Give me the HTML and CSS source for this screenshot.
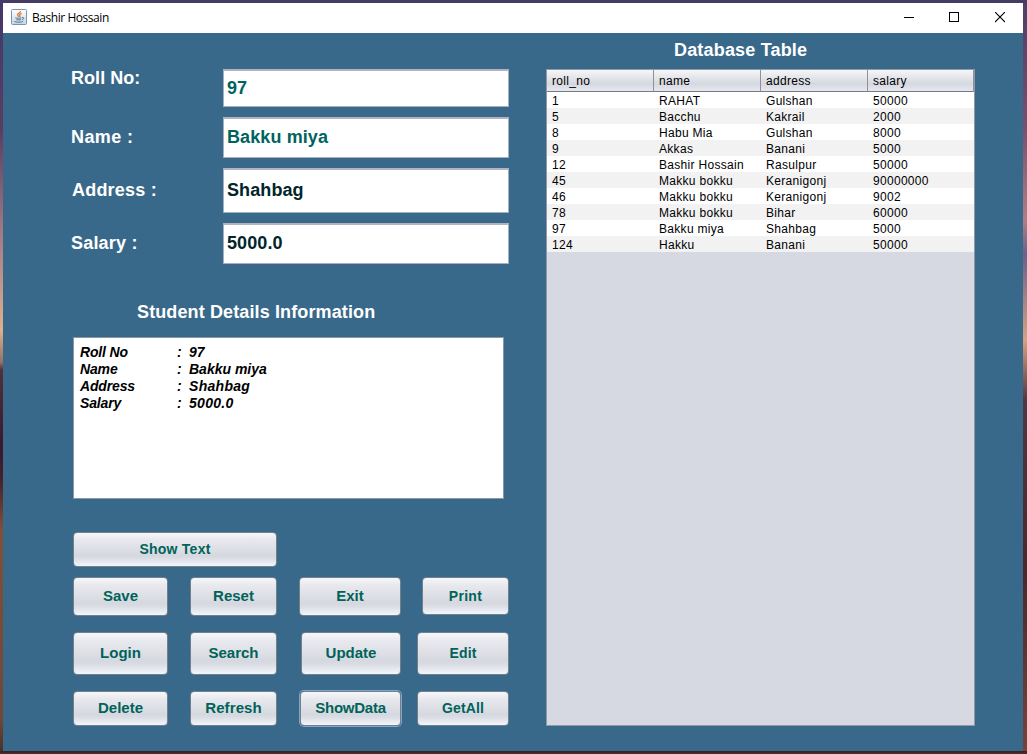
FILE: index.html
```html
<!DOCTYPE html>
<html lang="en">
<head>
<meta charset="utf-8">
<title>Bashir Hossain</title>
<link rel="stylesheet" href="styles.css">
</head>
<body>
<div class="window">
  <header class="titlebar">
    <svg class="app-icon" width="16" height="16" viewBox="0 0 16 16" fill="none">
      <rect x=".5" y=".5" width="15" height="15" rx="1" fill="url(#g)" stroke="#7896b1"/>
      <defs><linearGradient id="g" x2="0" y2="1"><stop stop-color="#fff"/><stop offset="1" stop-color="#c3d5e3"/></linearGradient></defs>
      <path d="M9.3 2C10 4 5.5 4.5 6.7 6.2L7.8 8M10.7 4.3C8.3 5.2 8.2 6 9 7L8.6 8" stroke="#e57b34" stroke-width="1.3"/>
      <path d="M4.3 8.8C5.5 9.4 9 9.3 10.4 8.8M5.3 10.7C7 11.1 8.8 11 10 10.7M11 8.6C13.5 8 13.3 10.2 11 10.7M3.2 12C3 13.4 10.5 13.6 12.2 12.2" stroke="#4c7594"/>
    </svg>
    <span class="caption">Bashir Hossain</span>
    <div class="controls">
      <svg width="10" height="11" viewBox="0 0 10 11"><path d="M0 5.5H10" stroke="#000"/></svg>
      <svg width="10" height="11" viewBox="0 0 10 11"><rect x=".5" y=".5" width="9" height="9" fill="none" stroke="#000"/></svg>
      <svg class="close" width="10" height="11" viewBox="0 0 10 11"><path d="M0 0L10 10M10 0L0 10" stroke="#000" stroke-width="1.1"/></svg>
    </div>
  </header>
  <main class="content">
    <section class="left">
      <form class="form">
        <label class="label-roll" for="roll">Roll No:</label><input id="roll" class="field teal" value="97">
        <label class="label-name" for="name">Name :</label><input id="name" class="field teal raised" value="Bakku miya">
        <label class="label-address" for="address">Address :</label><input id="address" class="field raised" value="Shahbag">
        <label for="salary">Salary :</label><input id="salary" class="field raised" value="5000.0">
      </form>
      <h2 class="details-title">Student Details Information</h2>
      <dl class="details">
        <dt>Roll No</dt><dd>:</dd><dd>97</dd>
        <dt>Name</dt><dd>:</dd><dd>Bakku miya</dd>
        <dt>Address</dt><dd>:</dd><dd class="wide">Shahbag</dd>
        <dt>Salary</dt><dd>:</dd><dd class="wide">5000.0</dd>
      </dl>
      <div class="actions">
        <div class="row row-show"><button class="show-text">Show Text</button></div>
        <div class="row row-a"><button class="c1">Save</button><button class="c2">Reset</button><button class="exit">Exit</button><button class="print">Print</button></div>
        <div class="row row-b"><button class="c1">Login</button><button class="c2">Search</button><button class="update">Update</button><button class="c4">Edit</button></div>
        <div class="row row-c"><button class="c1">Delete</button><button class="c2 refresh">Refresh</button><button class="show-data">ShowData</button><button class="c4">GetAll</button></div>
      </div>
    </section>
    <section class="right">
      <h2 class="table-title">Database Table</h2>
      <div class="table-pane">
        <table>
          <colgroup><col class="col"><col class="col"><col class="col"><col></colgroup>
          <thead><tr><th>roll_no</th><th>name</th><th>address</th><th>salary</th></tr></thead>
          <tbody>
            <tr><td>1</td><td>RAHAT</td><td>Gulshan</td><td>50000</td></tr>
            <tr><td>5</td><td>Bacchu</td><td>Kakrail</td><td>2000</td></tr>
            <tr><td>8</td><td>Habu Mia</td><td>Gulshan</td><td>8000</td></tr>
            <tr><td>9</td><td>Akkas</td><td>Banani</td><td>5000</td></tr>
            <tr><td>12</td><td>Bashir Hossain</td><td>Rasulpur</td><td>50000</td></tr>
            <tr><td>45</td><td>Makku bokku</td><td>Keranigonj</td><td>90000000</td></tr>
            <tr><td>46</td><td>Makku bokku</td><td>Keranigonj</td><td>9002</td></tr>
            <tr><td>78</td><td>Makku bokku</td><td>Bihar</td><td>60000</td></tr>
            <tr><td>97</td><td>Bakku miya</td><td>Shahbag</td><td>5000</td></tr>
            <tr><td>124</td><td>Hakku</td><td>Banani</td><td>50000</td></tr>
          </tbody>
        </table>
      </div>
    </section>
  </main>
</div>
</body>
</html>
```
FILE: styles.css
```css
* { box-sizing: border-box; }

body {
  margin: 0;
  height: 754px;
  padding: 3px 4px 3px 3px;
  overflow: hidden;
  font-family: "Liberation Sans", Arial, sans-serif;
  background:
    linear-gradient(#443c62, #443c62) 0 0 / 100% 3px no-repeat,
    linear-gradient(#352323, #4a302b) 0 100% / 100% 3px no-repeat,
    linear-gradient(#43376a 0, #5a3e60 130px, #a67f87 240px, #ddb18c 330px, #94726a 362px, #503039 370px, #35192c 450px, #44222a 480px, #805039 530px, #704735 720px, #44302b 754px) 0 0 / 3px 100% no-repeat,
    linear-gradient(#4c3e68 0, #79506f 130px, #ad7f85 220px, #6b618a 255px, #d5a282 340px, #513743 400px, #47292c 570px, #74463c 754px);
}

.window { height: 748px; background: #39698a; }

.titlebar {
  display: flex;
  height: 30px;
  padding: 6px 18px 0 8px;
  background: #fff;
}

.caption {
  margin-left: 5px;
  font: 12px/17px "Open Sans", sans-serif;
  letter-spacing: -.45px;
  color: #000;
}

.controls { display: flex; gap: 35px; margin: 3px 0 0 auto; }
.close { margin-left: 1px; }

.content { display: flex; height: 718px; }

.left { width: 506px; margin-right: 37px; padding: 36px 0 0 68px; }

.form {
  display: grid;
  grid-template-columns: 152px 286px;
  grid-template-rows: 38px 41px 45px 41px;
  row-gap: 10px;
  align-items: center;
}

label, h2, .field { font-size: 18px; font-weight: bold; letter-spacing: .1px; }
label { color: #fff; line-height: 20px; padding-bottom: 1px; letter-spacing: .2px; }
.label-roll { align-self: start; margin-top: -1px; letter-spacing: .05px; }
.label-name { letter-spacing: .4px; }
.label-address { padding-left: 1px; }

.field {
  width: 286px;
  height: 100%;
  padding: 0 3px;
  border: 1px solid #a3b0bd;
  border-top: 2px solid #b1b4bf;
  border-radius: 0;
  font-family: inherit;
  color: #00252b;
  background: #fff;
}
.raised { padding-bottom: 2px; }
.teal { color: #00635f; }

h2 { margin: 0; line-height: 20px; color: #fff; white-space: nowrap; }
.details-title { margin: 38px 0 0 66px; letter-spacing: .12px; }

.details {
  display: grid;
  grid-template-columns: 97px 12px 1fr;
  grid-auto-rows: 17px;
  width: 431px;
  height: 162px;
  margin: 15px 0 33px 2px;
  padding: 6px;
  border: 1px solid #8798a9;
  background: #fff;
  font: italic bold 14px/17px "Liberation Sans", Arial, sans-serif;
}
.details dt { letter-spacing: -.15px; }
.details dd { margin: 0; }
.details .wide { letter-spacing: .3px; }

.row { display: flex; margin-left: 2px; }
.row-show { height: 35px; margin-bottom: 10px; }
.row-a { height: 39px; margin-bottom: 16px; }
.row-b { height: 43px; margin-bottom: 16px; }
.row-c { height: 35px; }

button {
  padding: 0 0 2px;
  border: 1px solid #737f8b;
  border-radius: 4px;
  font: bold 15px "Liberation Sans", Arial, sans-serif;
  letter-spacing: 0;
  color: #00635b;
  background: linear-gradient(#f6f7fa 0, #e7e9ee 20%, #dddfe5 50%, #d5d8df 68%, #d9dce3 76%, #f2f5fa 100%);
}
.show-text { width: 204px; padding-bottom: 1px; font-size: 14px; letter-spacing: .25px; }
.c1 { width: 95px; margin-right: 22px; }
.c2 { width: 87px; }
.refresh { letter-spacing: .1px; }
.exit { width: 102px; margin: 0 21px 0 22px; }
.print { width: 87px; height: 38px; padding-bottom: 1px; font-size: 14px; letter-spacing: .3px; }
.update { width: 100px; margin: 0 16px 0 24px; }
.show-data { width: 101px; margin: 0 16px 0 23px; letter-spacing: -.25px; box-shadow: 0 0 0 1px #81a5cb; }
.c4 { width: 92px; padding-bottom: 1px; font-size: 14px; letter-spacing: .15px; }

.right { width: 429px; padding-top: 7px; }
.table-title { margin: 0 0 9px 128px; letter-spacing: .18px; }

.table-pane {
  height: 657px;
  border: 1px solid #9299a4;
  background: #d6d9e1;
}
table {
  width: 427px;
  border-collapse: separate;
  border-spacing: 0;
  table-layout: fixed;
  font-size: 12px;
  letter-spacing: .3px;
}
.col { width: 107px; }
th, td { padding: 0 0 0 5px; text-align: left; font-weight: normal; color: #000; }
th {
  height: 22px;
  padding-top: 1px;
  border-right: 1px solid #8b929e;
  border-bottom: 1px solid #737b88;
  line-height: 20px;
  background: linear-gradient(#f5f6f8 0, #e0e2e8 45%, #d5d8e0 65%, #e6e8ed 100%);
}
td { height: 16px; padding-top: 2px; line-height: 14px; background: #fff; }
tr:nth-child(even) td { background: #f2f2f2; }
```
